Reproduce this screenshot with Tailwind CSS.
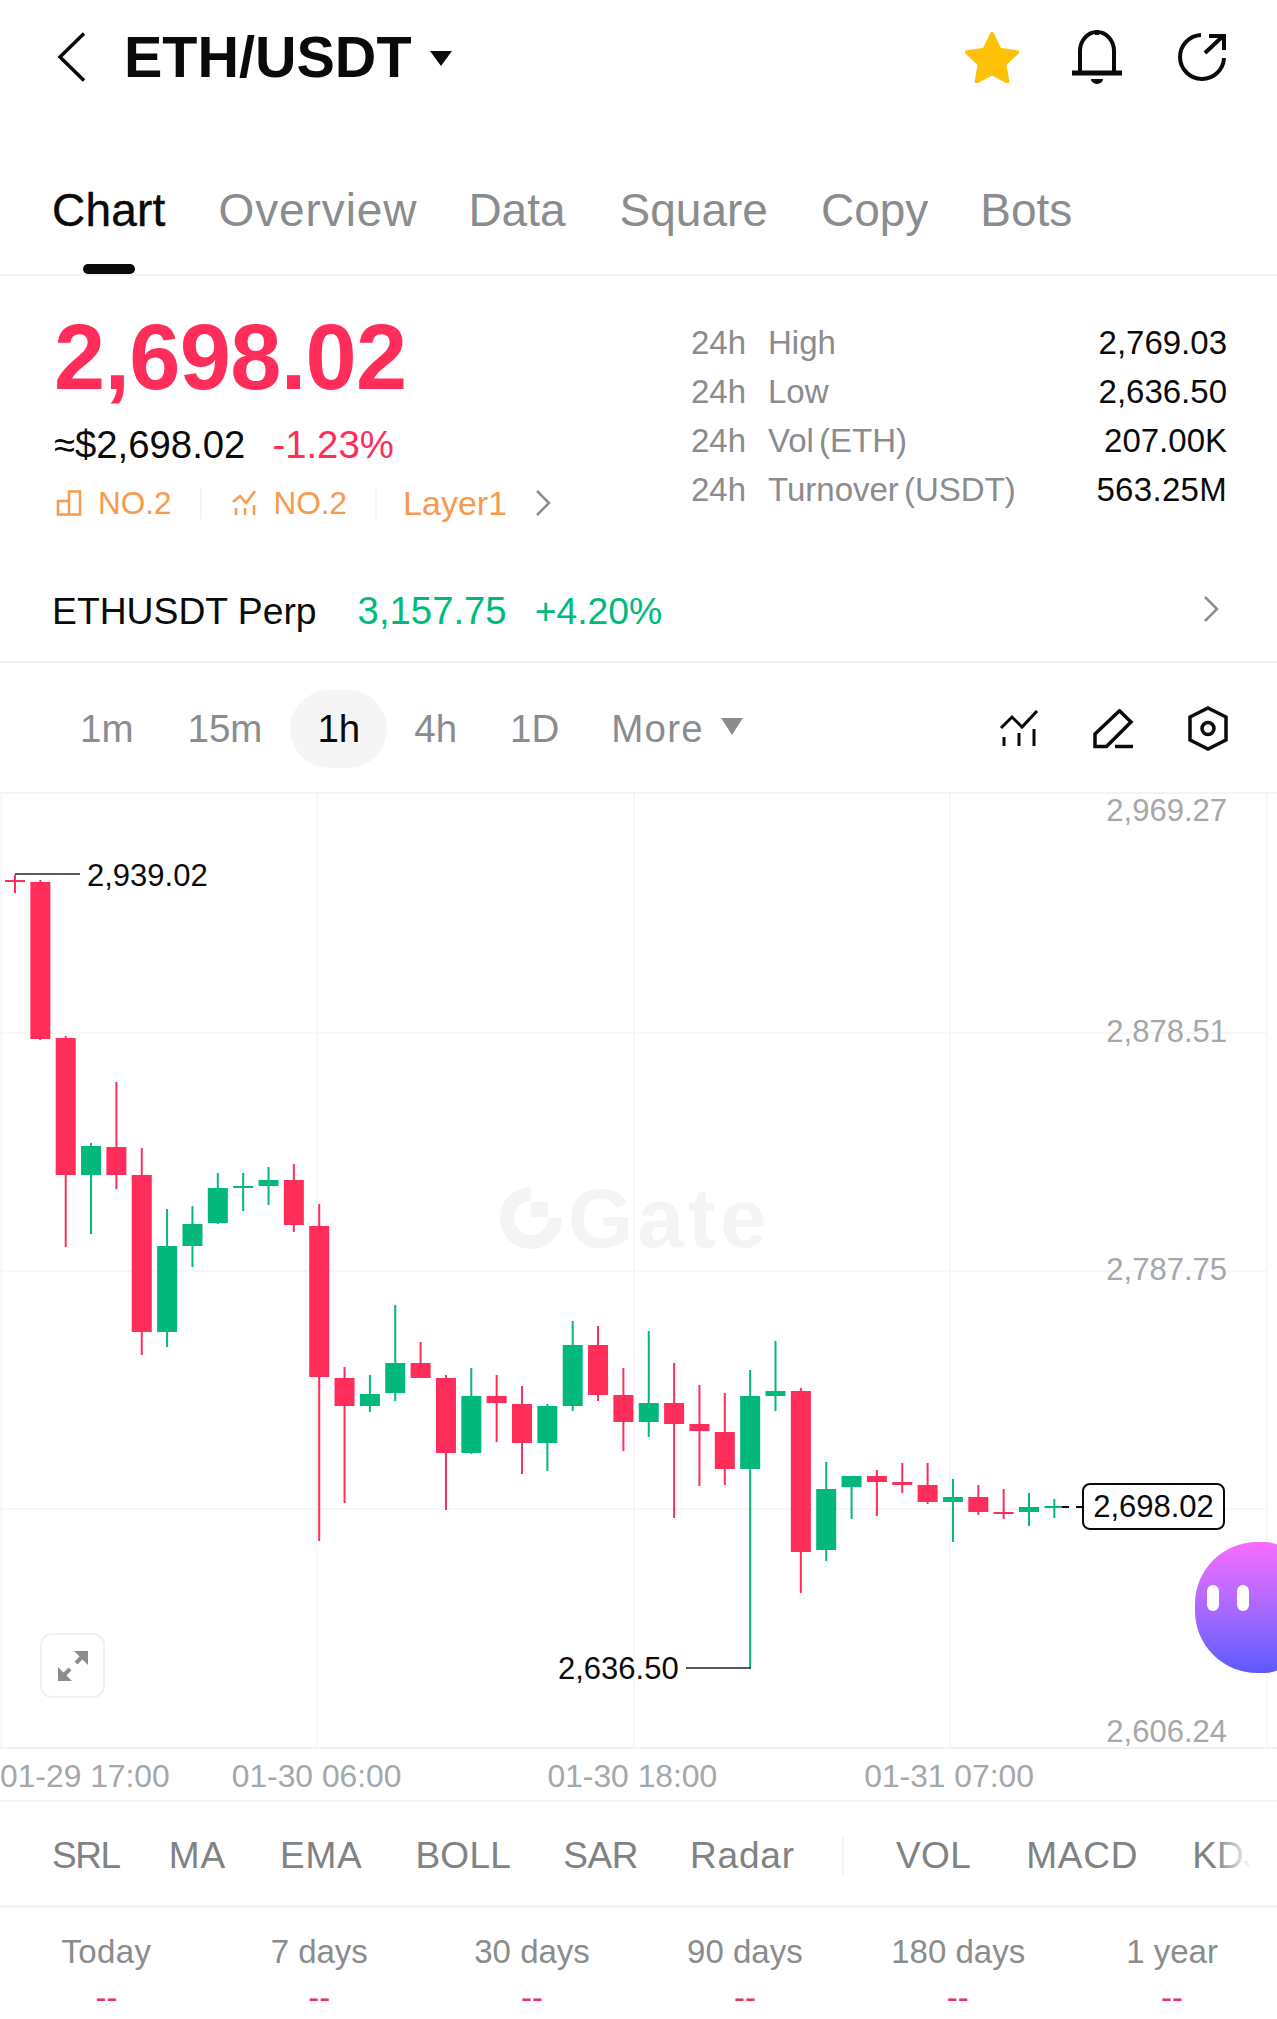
<!DOCTYPE html>
<html lang="en">
<head>
    <meta charset="UTF-8">
    <meta name="viewport" content="width=device-width, initial-scale=1.0">
    <title>ETH/USDT</title>
    <script src="https://cdn.jsdelivr.net/npm/@tailwindcss/browser@4"></script>
</head>
<body class="bg-white">
    <div class="w-[1277px] h-[2019px] overflow-hidden flex flex-col font-['Liberation_Sans',sans-serif] text-[#0a0a0a]">

        <!-- top bar -->
        <div class="h-[114px] shrink-0 flex items-center pl-[57px] pr-[51px]">
            <svg width="30" height="50" viewBox="0 0 30 50" fill="none" stroke="#0a0a0a" stroke-width="3.5"><path d="M27 1.5 3 25l24 23.5"/></svg>
            <span class="ml-[37px] text-[57.5px] leading-[64px] font-bold">ETH/USDT</span>
            <svg class="ml-[17px] mt-[2px]" width="24" height="16" viewBox="0 0 24 16" fill="#0a0a0a"><path d="M1 1h22L12 16z"/></svg>
            <div class="ml-auto flex items-center">
                <svg width="56" height="52" viewBox="0 0 56 52" fill="#fdc107" stroke="#fdc107" stroke-width="4" stroke-linejoin="round"><path d="M28 3l7.6 15.8 17.4 2.4-12.7 12.1 3.1 17.2L28 42.2 12.6 50.5l3.1-17.2L3 21.200l17.400-2.400z"/></svg>
                <svg class="ml-[52px]" width="50" height="54" viewBox="0 0 50 54" fill="none" stroke="#0a0a0a" stroke-width="4"><path d="M8 43V21a17 19 0 0 1 34 0v22"/><path d="M0 43h50" stroke-width="5"/><path d="M25 0v5" stroke-width="4"/><path d="M19 49h12a6 5 0 0 1-12 0z" fill="#0a0a0a" stroke="none"/></svg>
                <svg class="ml-[56px]" width="48" height="48" viewBox="0 0 48 48" fill="none" stroke="#0a0a0a" stroke-width="4"><path d="M23 2A22 22 0 1 0 46 25"/><path d="M27 20 45 3"/><path d="M31 3h15v14"/></svg>
            </div>
        </div>

        <!-- tabs -->
        <div class="h-[162px] shrink-0 relative flex items-start pl-[52px] pt-[70px] border-b-2 border-[#f2f2f2] text-[46px] leading-[52px] text-[#8a8c8e]">
            <span class="text-[#0a0a0a] tracking-[0.2px] [-webkit-text-stroke:0.4px_#0a0a0a]">Chart</span>
            <span class="ml-[53px] tracking-[0.9px]">Overview</span>
            <span class="ml-[51px]">Data</span>
            <span class="ml-[54px]">Square</span>
            <span class="ml-[53px]">Copy</span>
            <span class="ml-[52px]">Bots</span>
            <div class="absolute left-[83px] bottom-[0px] w-[52px] h-[10px] rounded-full bg-[#0a0a0a]"></div>
        </div>

        <!-- price block -->
        <div class="h-[387px] shrink-0 flex border-b-2 border-[#f2f2f2]">
            <div class="w-[691px] shrink-0 pl-[54px] pt-[35px]">
                <div class="text-[92px] leading-[92px] font-bold text-[#fe2d5a] tracking-[-0.7px]">2,698.02</div>
                <div class="mt-[18px] flex text-[38.3px] leading-[48px]">
                    <span>≈$2,698.02</span>
                    <span class="ml-[27px] text-[#fe2d5a]">-1.23%</span>
                </div>
                <div class="mt-[14px] flex items-center text-[31.5px] leading-[40px] text-[#f89a4c]">
                    <svg class="ml-[2px]" width="26" height="26" viewBox="0 0 26 26" fill="none" stroke="#f89a4c" stroke-width="2.5"><path d="M13 1.500h11v23H13zM2 11h11v13.500H2z"/></svg>
                    <span class="ml-[16px]">NO.2</span>
                    <div class="ml-[28px] w-[2px] h-[32px] bg-[#f4f4f4]"></div>
                    <svg class="ml-[30px]" width="26" height="26" viewBox="0 0 26 26" fill="none" stroke="#f89a4c" stroke-width="2.500"><path d="M1 12l7-6 6 7 9-12"/><path d="M4 18v7M13 18v7M22 15v10"/></svg>
                    <span class="ml-[16px]">NO.2</span>
                    <div class="ml-[28px] w-[2px] h-[32px] bg-[#f4f4f4]"></div>
                    <span class="ml-[26px] text-[34px]">Layer1</span>
                    <svg class="ml-[28px]" width="16" height="28" viewBox="0 0 16 28" fill="none" stroke="#8a8c8e" stroke-width="2.5"><path d="M2 2l12 12L2 26"/></svg>
                </div>
                <div class="mt-[66px] flex text-[37.3px] leading-[44px] whitespace-nowrap">
                    <span class="-ml-[2px]">ETHUSDT Perp</span>
                    <span class="ml-[41px] text-[#00ba7c] text-[38.3px]">3,157.75</span>
                    <span class="ml-[28px] text-[#00ba7c]">+4.20%</span>
                </div>
            </div>
            <div class="flex-1 relative pt-[42px] pr-[50px] text-[33px] leading-[49px]">
                <div class="flex text-[#8a8c8e]"><span class="w-[77px]">24h</span><span>High</span><span class="ml-auto text-[#0a0a0a]">2,769.03</span></div>
                <div class="flex text-[#8a8c8e]"><span class="w-[77px]">24h</span><span>Low</span><span class="ml-auto text-[#0a0a0a]">2,636.50</span></div>
                <div class="flex text-[#8a8c8e]"><span class="w-[77px]">24h</span><span class="[word-spacing:-4px]">Vol (ETH)</span><span class="ml-auto text-[#0a0a0a]">207.00K</span></div>
                <div class="flex text-[#8a8c8e]"><span class="w-[77px]">24h</span><span class="[word-spacing:-4px]">Turnover (USDT)</span><span class="ml-auto text-[#0a0a0a] tracking-[0.3px]">563.25M</span></div>
                <svg class="absolute right-[58px] bottom-[38px]" width="16" height="28" viewBox="0 0 16 28" fill="none" stroke="#8a8c8e" stroke-width="2.5"><path d="M2 2l12 12L2 26"/></svg>
            </div>
        </div>

        <!-- interval row -->
        <div class="h-[131px] shrink-0 flex items-center pl-[53px] pr-[49px] pt-[2px] border-b-2 border-[#f4f4f4] text-[38.5px] text-[#8a8c8e]">
            <span class="px-[27px] h-[78px] leading-[78px]">1m</span>
            <span class="px-[27px] h-[78px] leading-[78px]">15m</span>
            <span class="ml-[1px] px-[27px] h-[78px] leading-[78px] rounded-full bg-[#f5f5f5] text-[#0a0a0a]">1h</span>
            <span class="px-[27px] h-[78px] leading-[78px]">4h</span>
            <span class="pl-[26px] pr-[27px] h-[78px] leading-[78px]">1D</span>
            <span class="px-[25px] h-[78px] leading-[78px] tracking-[1.2px]">More</span>
            <svg class="-ml-[8px] -mt-[4px]" width="22" height="17" viewBox="0 0 22 17" fill="#8a8c8e"><path d="M0 0h22L11 17z"/></svg>
            <div class="ml-auto flex items-center">
                <svg width="40" height="38" viewBox="0 0 40 38" fill="none" stroke="#0a0a0a" stroke-width="3"><path d="M2 18l11-11 10 10L38 1"/><path d="M5 27v9M20 23v13M35 19v17"/></svg>
                <svg class="ml-[54px]" width="42" height="40" viewBox="0 0 42 40" fill="none" stroke="#0a0a0a" stroke-width="3.500"><path d="M26.500 1.800 38 13 13.500 37.500H2V25z"/><path d="M22 37.500h18"/></svg>
                <svg class="ml-[53px]" width="40" height="45" viewBox="0 0 40 45" fill="none" stroke="#0a0a0a" stroke-width="3.500"><path d="M20 2l18 9v23l-18 9-18-9V11z"/><circle cx="20" cy="22.500" r="6"/></svg>
            </div>
        </div>

        <!-- chart: a free canvas, candles are drawn from data below -->
        <div class="h-[953px] shrink-0 relative">
            <div class="absolute left-[500px] top-[393px] flex items-center text-[#f3f4f5]">
                <svg width="64" height="62" viewBox="0 0 64 62" fill="none" stroke="#f3f4f5" stroke-width="14"><path d="M31 7A24 24 0 1 0 55 31"/><rect x="31" y="15" width="17" height="15" fill="#f3f4f5" stroke="none"/></svg>
                <span class="ml-[4px] text-[84px] leading-[62px] font-bold tracking-[4px]">Gate</span>
            </div>

            <svg id="candles" class="absolute inset-0" width="1277" height="953" viewBox="0 794 1277 953"></svg>

            <div class="absolute right-[50px] top-[-1px] text-[31px] leading-[36px] text-[#a5a7a9]">2,969.27</div>
            <div class="absolute right-[50px] top-[220px] text-[31px] leading-[36px] text-[#a5a7a9]">2,878.51</div>
            <div class="absolute right-[50px] top-[458px] text-[31px] leading-[36px] text-[#a5a7a9]">2,787.75</div>
            <div class="absolute right-[50px] top-[920px] text-[31px] leading-[36px] text-[#a5a7a9]">2,606.24</div>

            <div class="absolute left-[87px] top-[64px] text-[31px] leading-[36px]">2,939.02</div>
            <div class="absolute left-[558px] top-[857px] text-[31px] leading-[36px]">2,636.50</div>

            <div class="absolute left-[1082px] top-[689px] w-[143px] h-[47px] rounded-[8px] border-2 border-[#0a0a0a] bg-white flex items-center justify-center text-[31px] pt-[2px]">2,698.02</div>

            <div class="absolute left-[40px] top-[839px] w-[65px] h-[65px] rounded-[12px] border-2 border-[#f0f0f0] bg-white flex items-center justify-center">
                <svg width="32" height="32" viewBox="0 0 32 32" fill="#8a8c8e" stroke="#8a8c8e"><path d="M17 1h14v14z" stroke="none"/><path d="M1 17v14h14z" stroke="none"/><path d="M25 7l-6 6M7 25l6-6" stroke-width="4"/></svg>
            </div>

            <div class="absolute left-[1195px] top-[748px] w-[100px] h-[131px] rounded-l-[62px] rounded-r-[30px] bg-linear-to-b from-[#f76bff] to-[#5a5aff] flex gap-[18px] pl-[12px] pt-[43px]">
                <div class="w-[12px] h-[26px] rounded-full bg-white"></div>
                <div class="w-[12px] h-[26px] rounded-full bg-white"></div>
            </div>
        </div>

        <!-- time axis -->
        <div class="h-[55px] shrink-0 flex items-center pt-[5px] text-[31.8px] text-[#a5a7a9] border-b-2 border-[#f4f4f4] whitespace-nowrap border-t-2 border-t-[#f2f2f2]">
            <span>01-29 17:00</span>
            <span class="ml-[62px]">01-30 06:00</span>
            <span class="ml-[146px]">01-30 18:00</span>
            <span class="ml-[147px]">01-31 07:00</span>
        </div>

        <!-- indicators -->
        <div class="h-[106px] shrink-0 relative flex items-center pl-[52px] pt-[4px] overflow-hidden border-b-[3px] border-[#f2f2f2] text-[37px] text-[#808284] whitespace-nowrap">
            <span class="tracking-[-1.4px]">SRL</span>
            <span class="ml-[49px] tracking-[0.9px]">MA</span>
            <span class="ml-[54px] tracking-[0.7px]">EMA</span>
            <span class="ml-[53px] tracking-[0.3px]">BOLL</span>
            <span class="ml-[52px] tracking-[-0.4px]">SAR</span>
            <span class="ml-[52px] tracking-[0.8px]">Radar</span>
            <div class="ml-[47px] w-[2px] h-[38px] bg-[#f4f4f4]"></div>
            <span class="ml-[52px] tracking-[0.4px]">VOL</span>
            <span class="ml-[55px] tracking-[0.8px]">MACD</span>
            <span class="ml-[54px]">KDJ</span>
            <div class="absolute left-[1215px] top-0 w-[62px] h-full bg-linear-to-r from-white/0 to-white to-60%"></div>
        </div>

        <!-- returns -->
        <div class="flex-1 grid grid-cols-6 text-center text-[33px] text-[#8a8c8e] pt-[24px]">
            <div><div class="leading-[40px] tracking-[0.4px]">Today</div><div class="mt-[7px] leading-[38px] text-[#e8325f]">--</div></div>
            <div><div class="leading-[40px]">7 days</div><div class="mt-[7px] leading-[38px] text-[#e8325f]">--</div></div>
            <div><div class="leading-[40px]">30 days</div><div class="mt-[7px] leading-[38px] text-[#e8325f]">--</div></div>
            <div><div class="leading-[40px]">90 days</div><div class="mt-[7px] leading-[38px] text-[#e8325f]">--</div></div>
            <div><div class="leading-[40px] pl-[1px]">180 days</div><div class="mt-[7px] leading-[38px] text-[#e8325f]">--</div></div>
            <div><div class="leading-[40px] pl-[3px]">1 year</div><div class="mt-[7px] leading-[38px] text-[#e8325f] pl-[3px]">--</div></div>
        </div>
    </div>

    <script>
        const RED = '#fe2d5a';
        const GREEN = '#02b97b';
        // [color, body top, body bottom, wick top, wick bottom]
        const candles = [
            ['r', 880, 882, 875, 893], ['r', 882, 1039, 880, 1040], ['r', 1038, 1175, 1036, 1247],
            ['g', 1146, 1175, 1143, 1234], ['r', 1147, 1175, 1082, 1189], ['r', 1175, 1332, 1148, 1355],
            ['g', 1246, 1332, 1209, 1347], ['g', 1224, 1246, 1206, 1267], ['g', 1188, 1223, 1173, 1224],
            ['g', 1186, 1188, 1173, 1211], ['g', 1180, 1186, 1167, 1205], ['r', 1180, 1225, 1164, 1232],
            ['r', 1226, 1377, 1204, 1541], ['r', 1378, 1406, 1367, 1503], ['g', 1394, 1406, 1375, 1412],
            ['g', 1363, 1393, 1305, 1401], ['r', 1363, 1378, 1342, 1378], ['r', 1378, 1453, 1375, 1510],
            ['g', 1396, 1453, 1368, 1454], ['r', 1396, 1403, 1375, 1442], ['r', 1404, 1443, 1386, 1474],
            ['g', 1406, 1443, 1404, 1471], ['g', 1345, 1406, 1321, 1411], ['r', 1345, 1395, 1326, 1401],
            ['r', 1395, 1422, 1368, 1451], ['g', 1403, 1422, 1331, 1437], ['r', 1403, 1424, 1363, 1518],
            ['r', 1424, 1431, 1385, 1486], ['r', 1432, 1469, 1393, 1485], ['g', 1396, 1469, 1370, 1668],
            ['g', 1391, 1396, 1341, 1411], ['r', 1391, 1552, 1388, 1593], ['g', 1489, 1550, 1462, 1561],
            ['g', 1476, 1487, 1476, 1519], ['r', 1476, 1482, 1470, 1516], ['r', 1482, 1485, 1463, 1493],
            ['r', 1485, 1502, 1463, 1504], ['g', 1497, 1502, 1479, 1542], ['r', 1497, 1512, 1485, 1515],
            ['r', 1512, 1514, 1489, 1519], ['g', 1507, 1512, 1493, 1526], ['g', 1506, 1508, 1499, 1518]
        ];

        let out = '';
        const line = (x1, y1, x2, y2, stroke, width) =>
            `<line x1="${x1}" y1="${y1}" x2="${x2}" y2="${y2}" stroke="${stroke}" stroke-width="${width}"/>`;

        // grid
        [1033, 1271, 1509].forEach(y => { out += line(0, y, 1267, y, '#f3f4f5', 1.5); });
        [1, 317, 634, 950, 1267].forEach(x => { out += line(x, 794, x, 1747, '#f3f4f5', 1.5); });

        candles.forEach((c, i) => {
            const x = 15 + i * 25.35;
            const fill = c[0] === 'r' ? RED : GREEN;
            out += line(x, c[3], x, c[4], fill, 2);
            out += `<rect x="${x - 10}" y="${c[1]}" width="20" height="${c[2] - c[1]}" fill="${fill}"/>`;
        });

        // high / low markers and last price dashes
        out += line(15, 874, 80, 874, '#222', 1.5);
        out += line(686, 1668, 751, 1668, '#222', 1.5);
        out += line(1062, 1507, 1069, 1507, '#0a0a0a', 2);
        out += line(1076, 1507, 1083, 1507, '#0a0a0a', 2);

        document.getElementById('candles').innerHTML = out;
    </script>
</body>
</html>
